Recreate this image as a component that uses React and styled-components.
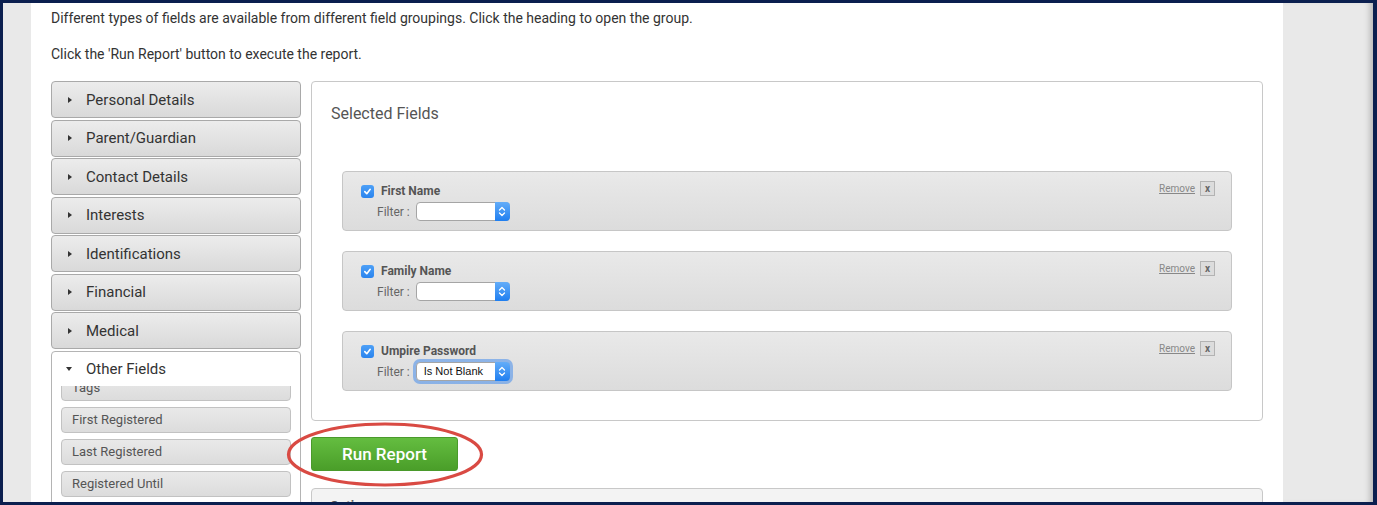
import React from 'react';
import styled, { createGlobalStyle } from 'styled-components';

const GlobalStyle = createGlobalStyle`
  html, body {
    margin: 0;
    padding: 0;
    background: #0b1f4f;
  }
  body {
    font-family: Roboto, 'Liberation Sans', sans-serif;
    color: #333;
  }
`;

const groups = [
  'Personal Details',
  'Parent/Guardian',
  'Contact Details',
  'Interests',
  'Identifications',
  'Financial',
  'Medical',
];

const otherFields = ['Tags', 'First Registered', 'Last Registered', 'Registered Until'];

const selected = [
  { name: 'First Name', filter: '' },
  { name: 'Family Name', filter: '' },
  { name: 'Umpire Password', filter: 'Is Not Blank', focused: true },
];

const App = () => {
  return (
    <Frame>
      <GlobalStyle />
      <Window>
        <SideGutter />
        <Content>
          <Intro>
            Different types of fields are available from different field groupings. Click the heading to open the group.
          </Intro>
          <Intro>Click the 'Run Report' button to execute the report.</Intro>

          <Columns>
            <Accordion>
              {groups.map((g) => (
                <GroupHeader key={g}>
                  <Caret />
                  {g}
                </GroupHeader>
              ))}
              <OpenGroup>
                <OpenHeader>
                  <Caret $open />
                  Other Fields
                </OpenHeader>
                <ScrollArea>
                  <FieldList>
                    {otherFields.map((f) => (
                      <FieldItem key={f}>{f}</FieldItem>
                    ))}
                  </FieldList>
                </ScrollArea>
              </OpenGroup>
            </Accordion>

            <Main>
              <SelectedBox>
                <BoxTitle>Selected Fields</BoxTitle>
                <Cards>
                  {selected.map((f) => (
                    <FieldCard key={f.name}>
                      <CardActions>
                        <RemoveLink href="#">Remove</RemoveLink>
                        <CloseButton>x</CloseButton>
                      </CardActions>
                      <NameRow>
                        <Check>
                          <svg width="9" height="9" viewBox="0 0 10 10">
                            <path d="M2 5.2 L4.2 7.4 L8 2.6" fill="none" stroke="#fff" strokeWidth="1.8" strokeLinecap="round" strokeLinejoin="round" />
                          </svg>
                        </Check>
                        <FieldName>{f.name}</FieldName>
                      </NameRow>
                      <FilterRow>
                        <FilterLabel>Filter :</FilterLabel>
                        <SelectWrap $focused={f.focused}>
                          <SelectValue>{f.filter}</SelectValue>
                          <SelectArrow>
                            <svg width="8" height="11" viewBox="0 0 8 11">
                              <path d="M1.5 4 L4 1.5 L6.5 4 M1.5 7 L4 9.5 L6.5 7" fill="none" stroke="#fff" strokeWidth="1.3" strokeLinecap="round" strokeLinejoin="round" />
                            </svg>
                          </SelectArrow>
                        </SelectWrap>
                      </FilterRow>
                    </FieldCard>
                  ))}
                </Cards>
              </SelectedBox>

              <ButtonRow>
                <RunButton>Run Report</RunButton>
                <Highlight width="198" height="65" viewBox="0 0 198 65">
                  <ellipse cx="99" cy="32.5" rx="96.5" ry="30.5" fill="none" stroke="#d94a43" strokeWidth="3.2" />
                </Highlight>
              </ButtonRow>

              <OptionsBox>
                <OptionsTitle>Options</OptionsTitle>
              </OptionsBox>
            </Main>
          </Columns>
        </Content>
        <RightGutter />
      </Window>
    </Frame>
  );
};

export default App;

// Styled components
const Frame = styled.div`
  padding: 3px 4px 3px 3px;
  height: 505px;
  box-sizing: border-box;
  overflow: hidden;
`;

const Window = styled.div`
  display: grid;
  grid-template-columns: 28px 1252px 1fr;
  height: 499px;
  overflow: hidden;
  background: #fff;
`;

const SideGutter = styled.div`
  background: #e9e9e9;
`;

const RightGutter = styled.div`
  background: #e9e9e9;
  box-shadow: inset -7px 0 6px -4px rgba(0, 0, 0, 0.22);
`;

const Content = styled.div`
  padding: 6px 20px 0 20px;
  overflow: hidden;
`;

const Intro = styled.p`
  margin: 0 0 18px;
  font-size: 14px;
  line-height: 18px;
  color: #333;
`;

const Columns = styled.div`
  display: flex;
  align-items: flex-start;
  gap: 10px;
  margin-top: 1px;
`;

const Accordion = styled.div`
  width: 250px;
  flex-shrink: 0;
  display: flex;
  flex-direction: column;
  gap: 1.5px;
`;

const GroupHeader = styled.div`
  display: flex;
  align-items: center;
  height: 37px;
  box-sizing: border-box;
  padding-left: 16px;
  border: 1px solid #a9a9a9;
  border-radius: 4px;
  background: linear-gradient(#ececec, #d9d9d9);
  font-size: 15px;
  color: #333;
`;

const Caret = styled.span`
  width: 0;
  height: 0;
  margin-right: 14px;
  ${({ $open }) =>
    $open
      ? `
    border-left: 3.5px solid transparent;
    border-right: 3.5px solid transparent;
    border-top: 4px solid #333;
    margin-left: -2px;
    margin-right: 14px;
  `
      : `
    border-top: 3.5px solid transparent;
    border-bottom: 3.5px solid transparent;
    border-left: 4px solid #333;
  `}
`;

const OpenGroup = styled.div`
  border: 1px solid #b4b4b4;
  border-radius: 4px 4px 0 0;
  background: #fff;
`;

const OpenHeader = styled.div`
  display: flex;
  align-items: center;
  height: 34px;
  padding-left: 16px;
  font-size: 15px;
  color: #333;
`;

const ScrollArea = styled.div`
  height: 140px;
  overflow: hidden;
`;

const FieldList = styled.div`
  display: flex;
  flex-direction: column;
  gap: 6px;
  margin-top: -11px;
  padding: 0 9px;
`;

const FieldItem = styled.div`
  height: 26px;
  box-sizing: border-box;
  display: flex;
  align-items: center;
  padding-left: 10px;
  border: 1px solid #c2c2c2;
  border-radius: 4px;
  background: linear-gradient(#e9e9e9, #dcdcdc);
  font-size: 13px;
  color: #555;
`;

const Main = styled.div`
  flex: 1;
  display: flex;
  flex-direction: column;
`;

const SelectedBox = styled.div`
  border: 1px solid #c8c8c8;
  border-radius: 4px;
  padding: 0 30px 29px;
`;

const BoxTitle = styled.h2`
  margin: 22px 0 0 -11px;
  font-size: 16px;
  line-height: 20px;
  font-weight: 400;
  color: #555;
`;

const Cards = styled.div`
  display: flex;
  flex-direction: column;
  gap: 20px;
  margin-top: 47px;
`;

const FieldCard = styled.div`
  position: relative;
  height: 60px;
  box-sizing: border-box;
  padding: 12px 18px 0;
  border: 1px solid #c6c6c6;
  border-radius: 4px;
  background: linear-gradient(#e9e9e9, #dcdcdc);
`;

const CardActions = styled.div`
  position: absolute;
  top: 9px;
  right: 16px;
  display: flex;
  align-items: center;
  gap: 5px;
`;

const RemoveLink = styled.a`
  font-size: 10px;
  color: #888;
  text-decoration: underline;
`;

const CloseButton = styled.span`
  width: 15px;
  height: 15px;
  box-sizing: border-box;
  display: flex;
  align-items: center;
  justify-content: center;
  border: 1px solid #b3b3b3;
  background: #dcdcdc;
  font-size: 10px;
  font-weight: 700;
  color: #666;
`;

const NameRow = styled.div`
  display: flex;
  align-items: center;
  gap: 7px;
  height: 14px;
`;

const Check = styled.span`
  width: 13px;
  height: 13px;
  border-radius: 3px;
  background: linear-gradient(#4da0f7, #2a84ee);
  display: flex;
  align-items: center;
  justify-content: center;
`;

const FieldName = styled.span`
  font-size: 12px;
  font-weight: 700;
  color: #555;
`;

const FilterRow = styled.div`
  display: flex;
  align-items: center;
  gap: 6px;
  margin-top: 4px;
  padding-left: 16px;
`;

const FilterLabel = styled.span`
  font-size: 12px;
  color: #666;
`;

const SelectWrap = styled.div`
  position: relative;
  width: 94px;
  height: 19px;
  box-sizing: border-box;
  border: 1px solid #a5a5a5;
  border-radius: 4px;
  background: #fff;
  box-shadow: ${({ $focused }) => ($focused ? '0 0 0 3px rgba(83, 148, 235, 0.6)' : 'none')};
`;

const SelectValue = styled.span`
  display: block;
  padding-left: 7px;
  font-family: 'Liberation Sans', Arial, sans-serif;
  font-size: 11px;
  line-height: 17px;
  color: #111;
`;

const SelectArrow = styled.span`
  position: absolute;
  top: -1px;
  right: -1px;
  bottom: -1px;
  width: 15px;
  border-radius: 0 4px 4px 0;
  background: linear-gradient(#63adf9, #1f7ef0);
  display: flex;
  align-items: center;
  justify-content: center;
`;

const ButtonRow = styled.div`
  position: relative;
  margin-top: 16px;
  align-self: flex-start;
`;

const RunButton = styled.button`
  width: 147px;
  height: 34px;
  border: 1px solid #4a9a2b;
  border-radius: 3px;
  background: linear-gradient(#64bd40, #4a9e29);
  color: #fff;
  font-family: Roboto, 'Liberation Sans', sans-serif;
  font-size: 17px;
  font-weight: 500;
  cursor: pointer;
`;

const Highlight = styled.svg`
  position: absolute;
  left: -25px;
  top: -15px;
  pointer-events: none;
`;

const OptionsBox = styled.div`
  margin-top: 17px;
  height: 60px;
  border: 1px solid #c8c8c8;
  border-radius: 4px;
  background: #f3f3f3;
  padding: 9px 18px;
`;

const OptionsTitle = styled.div`
  font-size: 13px;
  font-weight: 700;
  color: #555;
`;
